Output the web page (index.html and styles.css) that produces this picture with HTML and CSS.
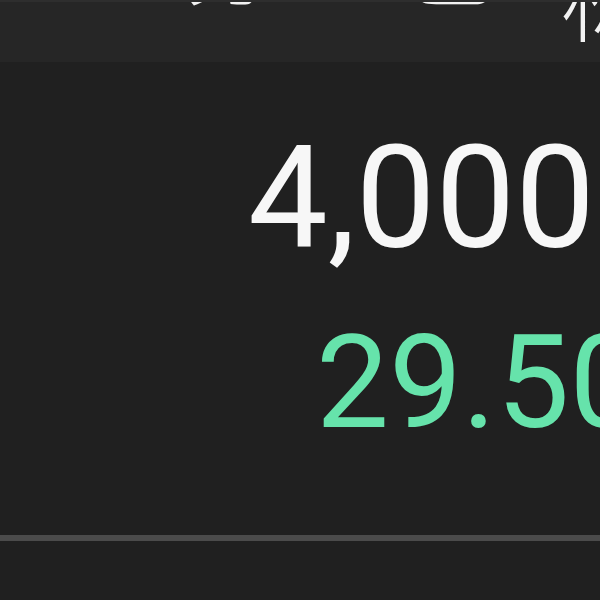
FILE: index.html
```html
<!DOCTYPE html>
<html lang="zh-CN">
<head>
    <meta charset="UTF-8">
    <meta name="viewport" content="width=device-width, initial-scale=1.0">
    <title>行情</title>
    <link rel="stylesheet" href="styles.css">
</head>
<body>
    <div class="tabs">
        <span class="tab tab-a">分</span>
        <span class="tab tab-b">己</span>
        <span class="tab tab-c">标</span>
    </div>
    <div class="quote">
        <div class="price">4,000</div>
        <div class="change">29.50%</div>
    </div>
    <div class="divider"></div>
    <div class="rest"></div>
</body>
</html>
```

FILE: styles.css
```css
/* Tema escuro */
body {
    margin: 0;
    padding: 0;
    background-color: #202020;
    font-family: Roboto, "Noto Sans CJK SC", sans-serif;
    width: 600px;
    height: 600px;
    overflow: hidden;
}

.tabs {
    height: 62px;
    background-color: #262626;
    border-top: 2px solid #2e2e2e;
    box-sizing: border-box;
    overflow: hidden;
    position: relative;
}

.tab {
    position: absolute;
    color: #f2f2f2;
    font-size: 90px;
    font-weight: 300;
    line-height: 1;
    font-family: "Noto Sans CJK SC", sans-serif;
}

.tab-a {
    left: 185px;
    top: -88px;
}

.tab-b {
    left: 405px;
    top: -87px;
}

.tab-c {
    left: 561px;
    top: -51px;
}

.quote {
    padding-top: 66px;
    white-space: nowrap;
    overflow: hidden;
}

.price {
    font-size: 142px;
    line-height: 1;
    color: #f7f7f7;
    padding-left: 248px;
}

.change {
    font-size: 130px;
    line-height: 1;
    color: #66e3ab;
    padding-left: 316px;
    margin-top: 48px;
}

.divider {
    margin-top: 87px;
    height: 6px;
    background-color: #4b4b4b;
}
```
